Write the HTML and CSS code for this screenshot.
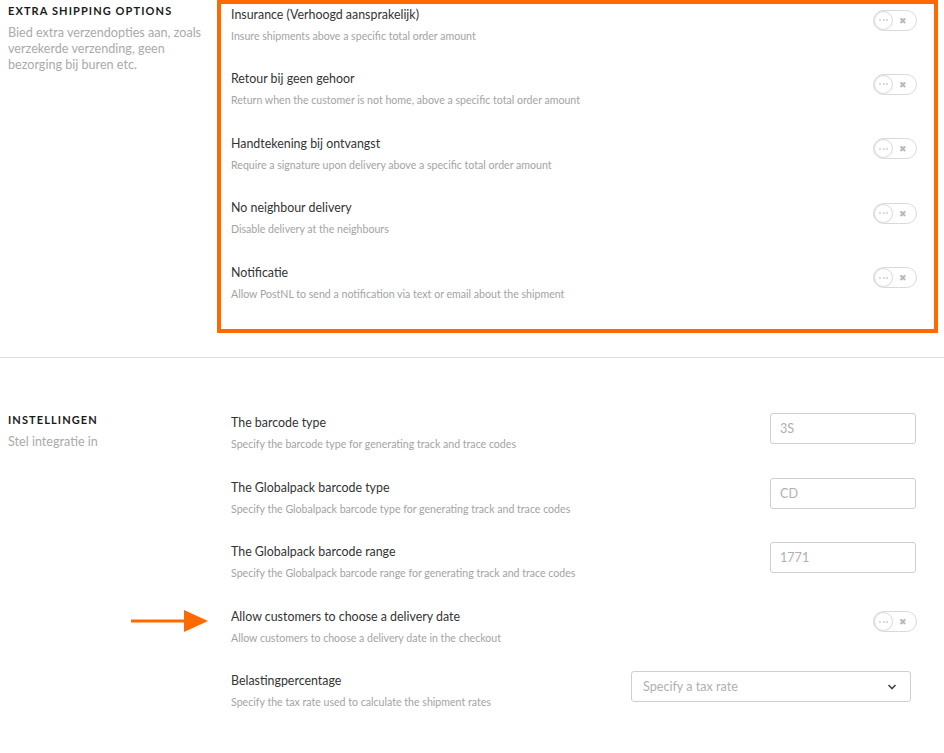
FILE: index.html
```html
<!DOCTYPE html>
<html>
<head>
<meta charset="utf-8">
<link rel="stylesheet" href="styles.css">
</head>
<body>
<div class="page">
  <section class="group">
    <div class="side">
      <h3 class="side-title">EXTRA SHIPPING OPTIONS</h3>
      <p class="side-desc">Bied extra verzendopties aan, zoals verzekerde verzending, geen bezorging bij buren etc.</p>
    </div>
    <div class="fields highlight">
      <div class="row">
        <div class="text"><div class="title">Insurance (Verhoogd aansprakelijk)</div><div class="desc">Insure shipments above a specific total order amount</div></div>
        <div class="toggle"><span class="knob"><i></i><i></i><i></i></span><span class="x">✖</span></div>
      </div>
      <div class="row">
        <div class="text"><div class="title">Retour bij geen gehoor</div><div class="desc">Return when the customer is not home, above a specific total order amount</div></div>
        <div class="toggle"><span class="knob"><i></i><i></i><i></i></span><span class="x">✖</span></div>
      </div>
      <div class="row">
        <div class="text"><div class="title">Handtekening bij ontvangst</div><div class="desc">Require a signature upon delivery above a specific total order amount</div></div>
        <div class="toggle"><span class="knob"><i></i><i></i><i></i></span><span class="x">✖</span></div>
      </div>
      <div class="row">
        <div class="text"><div class="title">No neighbour delivery</div><div class="desc">Disable delivery at the neighbours</div></div>
        <div class="toggle"><span class="knob"><i></i><i></i><i></i></span><span class="x">✖</span></div>
      </div>
      <div class="row">
        <div class="text"><div class="title">Notificatie</div><div class="desc">Allow PostNL to send a notification via text or email about the shipment</div></div>
        <div class="toggle"><span class="knob"><i></i><i></i><i></i></span><span class="x">✖</span></div>
      </div>
    </div>
  </section>
  <hr class="divider">
  <section class="group second">
    <div class="side">
      <h3 class="side-title">INSTELLINGEN</h3>
      <p class="side-desc">Stel integratie in</p>
    </div>
    <div class="fields plain">
      <div class="row">
        <div class="text"><div class="title">The barcode type</div><div class="desc">Specify the barcode type for generating track and trace codes</div></div>
        <div class="input">3S</div>
      </div>
      <div class="row">
        <div class="text"><div class="title">The Globalpack barcode type</div><div class="desc">Specify the Globalpack barcode type for generating track and trace codes</div></div>
        <div class="input">CD</div>
      </div>
      <div class="row">
        <div class="text"><div class="title">The Globalpack barcode range</div><div class="desc">Specify the Globalpack barcode range for generating track and trace codes</div></div>
        <div class="input">1771</div>
      </div>
      <div class="row marked">
        <svg class="arrow" width="80" height="24" viewBox="0 0 80 24"><line x1="0" y1="12" x2="56" y2="12" stroke="#ff6a00" stroke-width="3"/><polygon points="53,1 77,12 53,23" fill="#ff6a00"/></svg>
        <div class="text"><div class="title">Allow customers to choose a delivery date</div><div class="desc">Allow customers to choose a delivery date in the checkout</div></div>
        <div class="toggle"><span class="knob"><i></i><i></i><i></i></span><span class="x">✖</span></div>
      </div>
      <div class="row">
        <div class="text"><div class="title">Belastingpercentage</div><div class="desc">Specify the tax rate used to calculate the shipment rates</div></div>
        <div class="select"><span>Specify a tax rate</span><svg width="10" height="8" viewBox="0 0 10 8"><path d="M1.5 2 L5 5.5 L8.5 2" fill="none" stroke="#444" stroke-width="1.6"/></svg></div>
      </div>
    </div>
  </section>
</div>
</body>
</html>
```
FILE: styles.css
```css
* { box-sizing: border-box; }
html, body { margin: 0; padding: 0; background: #fff; }
body { font-family: Lato, "Open Sans", sans-serif; color: #333; width: 944px; height: 753px; overflow: hidden; }
.page { width: 944px; }
.group { display: flex; align-items: flex-start; }
.side { width: 217px; flex: none; padding-left: 8px; padding-right: 4px; }
.side-title { margin: 4px 0 0; font-size: 11px; font-weight: 700; letter-spacing: 1.1px; line-height: 13px; color: #1a1a1a; }
.side-desc { margin: 8px 0 0; font-size: 12.6px; line-height: 16px; color: #aaaaaa; }
.fields { flex: none; }
.highlight { width: 721px; border: 4px solid #ff6a00; padding: 0 17px 3px 10px; }
.plain { width: 700px; padding-left: 14px; }
.row { height: 64.4px; display: flex; justify-content: space-between; align-items: flex-start; padding-top: 1px; position: relative; }
.plain .row { height: 64.6px; }
.title { font-size: 12.4px; line-height: 20px; color: #333; }
.desc { font-size: 10.6px; line-height: 16px; color: #a3a3a3; margin-top: 3px; }
.toggle { width: 44px; height: 21px; margin-top: 4.5px; border: 1px solid #d9d9d9; border-radius: 11px; display: flex; align-items: center; justify-content: space-between; padding: 0 9px 0 0; }
.knob { width: 19px; height: 19px; border: 1px solid #d9d9d9; border-radius: 50%; display: flex; align-items: center; justify-content: center; gap: 1.5px; }
.knob i { width: 2px; height: 2px; border-radius: 50%; background: #cfcfcf; display: block; }
.x { font-size: 9px; color: #b8b8b8; line-height: 1; }
.divider { margin: 24px 0 0; border: 0; border-top: 1px solid #dcdedd; height: 0; }
.second { margin-top: 54px; }
.second .side-title { margin-top: 1px; }
.second .side-desc { margin-top: 8px; }
.input { width: 146px; height: 31px; margin-right: 1px; border: 1px solid #cfcfcf; border-radius: 3px; font-size: 12.6px; color: #b0b0b0; padding: 7px 9px; line-height: 15px; }
.select { width: 280px; height: 31px; margin-right: 6px; border: 1px solid #cfcfcf; border-radius: 3px; display: flex; align-items: center; justify-content: space-between; padding: 0 13px 0 11px; font-size: 12.6px; color: #b0b0b0; }
.marked .arrow { position: absolute; left: -100px; top: 3px; }
```
